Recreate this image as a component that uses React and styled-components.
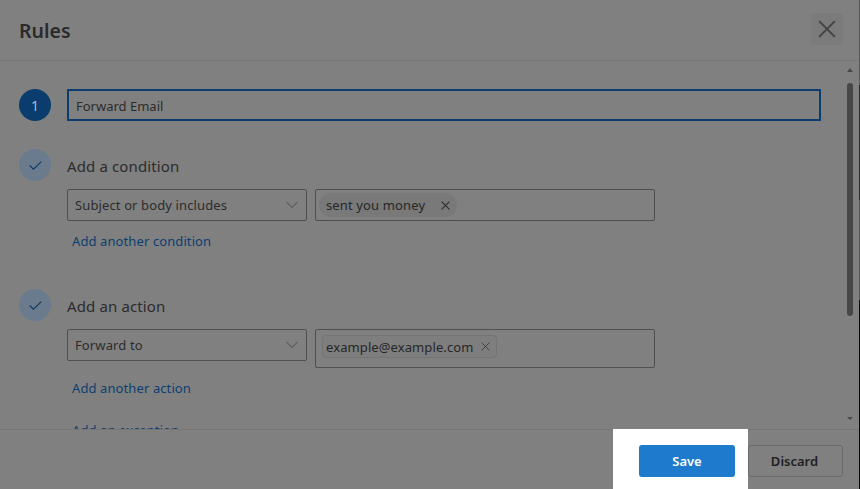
import React from "react";
import styled, { createGlobalStyle } from "styled-components";

const GlobalStyle = createGlobalStyle`
  html, body {
    margin: 0;
    padding: 0;
    background: #808080;
  }
  body {
    font-family: "Noto Sans", "Open Sans", sans-serif;
    overflow: hidden;
  }
`;

const Page = styled.div`
  display: flex;
  width: 860px;
  height: 489px;
  overflow: hidden;
`;
const Dialog = styled.div`
  flex: 1;
  display: flex;
  flex-direction: column;
  background: #808080;
  color: #2c2c2c;
`;
const EdgeStrip = styled.div`
  width: 1px;
  background: linear-gradient(#5a5a5a 0 85px, #2a2a2a 85px 200px, #555 200px 300px, #0a0a0a 300px);
`;
const Header = styled.div`
  height: 60px;
  flex: none;
  display: flex;
  align-items: center;
  justify-content: space-between;
  padding: 0 16px 0 19px;
  border-bottom: 1px solid #757575;
`;
const Title = styled.div`
  font-size: 19.5px;
  font-weight: 600;
  color: #2a2a2a;
  margin-top: 1px;
`;
const CloseButton = styled.div`
  width: 32px;
  height: 32px;
  margin-top: -2px;
  display: flex;
  align-items: center;
  justify-content: center;
  background: #7b7b7b;
  border-radius: 3px;
`;
const Body = styled.div`
  flex: 1;
  min-height: 0;
  display: flex;
`;
const Content = styled.div`
  flex: 1;
  min-width: 0;
  padding: 28px 0 0 19px;
  overflow: hidden;
`;
const Step = styled.div`
  display: flex;
  gap: 16px;
  margin-bottom: ${(p) => p.$gap}px;
`;
const Circle = styled.div`
  width: 32px;
  height: 32px;
  flex: none;
  border-radius: 50%;
  display: flex;
  align-items: center;
  justify-content: center;
  font-size: 14px;
  background: ${(p) => (p.$done ? "#6a7b8d" : "#0a3d6e")};
  color: #a9bccd;
`;
const StepMain = styled.div`
  flex: 1;
  min-width: 0;
`;
const NameInput = styled.div`
  box-sizing: border-box;
  width: 754px;
  height: 32px;
  border: 2px solid #0a3d6e;
  padding: 2px 7px 0;
  display: flex;
  align-items: center;
  font-size: 13px;
  color: #2c2c2c;
`;
const StepLabel = styled.div`
  box-sizing: border-box;
  height: 32px;
  padding-top: 2px;
  display: flex;
  align-items: center;
  font-size: 15px;
  letter-spacing: 0.13px;
  color: #2c2c2c;
  margin-bottom: 8px;
`;
const FieldRow = styled.div`
  display: flex;
  align-items: flex-start;
  gap: 8px;
`;
const Select = styled.div`
  box-sizing: border-box;
  width: 240px;
  height: 32px;
  border: 1px solid #4f4f4f;
  border-radius: 2px;
  padding: 0 8px 0 7px;
  display: flex;
  align-items: center;
  justify-content: space-between;
  font-size: 13px;
  letter-spacing: 0.12px;
`;
const TagBox = styled.div`
  box-sizing: border-box;
  width: 340px;
  height: ${(p) => p.$height}px;
  border: 1px solid #4f4f4f;
  border-radius: 2px;
  padding: ${(p) => (p.$outlined ? "5px 6px" : "3px")};
  display: flex;
  align-items: flex-start;
`;
const Tag = styled.div`
  height: 24px;
  display: flex;
  align-items: center;
  gap: 16px;
  padding: 0 7px;
  font-size: 13px;
  letter-spacing: 0.13px;
  border-radius: 12px;
  background: #797979;
  color: #262626;
  white-space: nowrap;
`;
const OutlinedTag = styled(Tag)`
  box-sizing: border-box;
  height: 23px;
  gap: 7px;
  padding: 0 6px 0 3px;
  border-radius: 4px;
  background: #7e7e7e;
  border: 1px solid #747474;
  letter-spacing: 0.1px;
`;
const AddLink = styled.div`
  font-size: 13px;
  letter-spacing: 0.1px;
  color: #0c3f70;
  margin: ${(p) => p.$top}px 0 0 5px;
  line-height: 18px;
  white-space: nowrap;
`;
const ScrollTrack = styled.div`
  width: 6px;
  margin-right: 6px;
  flex: none;
  display: flex;
  flex-direction: column;
  align-items: center;
  padding-top: 7px;
`;
const ArrowUp = styled.div`
  width: 0;
  height: 0;
  border-left: 3px solid transparent;
  border-right: 3px solid transparent;
  border-bottom: 4px solid #484848;
`;
const ArrowDown = styled.div`
  width: 0;
  height: 0;
  margin-top: 101px;
  border-left: 3px solid transparent;
  border-right: 3px solid transparent;
  border-top: 3px solid #484848;
`;
const Thumb = styled.div`
  width: 6px;
  height: 233px;
  margin-top: 11px;
  border-radius: 3px;
  background: #474747;
`;
const Footer = styled.div`
  height: 60px;
  flex: none;
  box-sizing: border-box;
  display: flex;
  justify-content: flex-end;
  border-top: 1px solid #757575;
  padding-right: 16px;
`;
const Spotlight = styled.div`
  width: 135px;
  margin-top: -1px;
  box-sizing: border-box;
  background: #fff;
  padding: 16px 13px 12px 26px;
`;
const SaveButton = styled.div`
  height: 32px;
  border-radius: 3px;
  background: #1d7acc;
  color: #fff;
  font-size: 13px;
  font-weight: 600;
  display: flex;
  align-items: center;
  justify-content: center;
`;
const DiscardButton = styled.div`
  box-sizing: border-box;
  width: 95px;
  height: 32px;
  margin-top: 15px;
  padding-right: 2px;
  border: 1px solid #6a6a6a;
  border-radius: 3px;
  color: #1f1f1f;
  font-size: 13px;
  font-weight: 600;
  display: flex;
  align-items: center;
  justify-content: center;
`;

const Cross = ({ size, stroke, width }) => (
  <svg width={size} height={size} viewBox="0 0 16 16" fill="none">
    <path d="M1 1L15 15M15 1L1 15" stroke={stroke} strokeWidth={width} />
  </svg>
);

const Chevron = () => (
  <svg width="12" height="8" viewBox="0 0 12 8" fill="none">
    <path d="M0.5 1L6 6.5L11.5 1" stroke="#4a4a4a" strokeWidth="1" />
  </svg>
);

const Check = () => (
  <svg width="13" height="9" viewBox="0 0 13 9" fill="none">
    <path d="M0.7 4.5L4.5 8.2L12.3 0.6" stroke="#0f3a63" strokeWidth="1.1" />
  </svg>
);

const App = () => {
  return (
    <Page>
      <GlobalStyle />
      <Dialog>
        <Header>
          <Title>Rules</Title>
          <CloseButton>
            <Cross size={18} stroke="#444" width={1.8} />
          </CloseButton>
        </Header>
        <Body>
          <Content>
            <Step $gap={28}>
              <Circle>1</Circle>
              <NameInput>Forward Email</NameInput>
            </Step>
            <Step $gap={39}>
              <Circle $done>
                <Check />
              </Circle>
              <StepMain>
                <StepLabel>Add a condition</StepLabel>
                <FieldRow>
                  <Select>
                    Subject or body includes
                    <Chevron />
                  </Select>
                  <TagBox $height={32}>
                    <Tag>
                      sent you money
                      <Cross size={9} stroke="#2a2a2a" width={1.8} />
                    </Tag>
                  </TagBox>
                </FieldRow>
                <AddLink $top={11}>Add another condition</AddLink>
              </StepMain>
            </Step>
            <Step $gap={0}>
              <Circle $done>
                <Check />
              </Circle>
              <StepMain>
                <StepLabel>Add an action</StepLabel>
                <FieldRow>
                  <Select>
                    Forward to
                    <Chevron />
                  </Select>
                  <TagBox $height={39} $outlined>
                    <OutlinedTag>
                      example@example.com
                      <Cross size={9} stroke="#3a3a3a" width={1.6} />
                    </OutlinedTag>
                  </TagBox>
                </FieldRow>
                <AddLink $top={11}>Add another action</AddLink>
                <AddLink $top={24}>Add an exception</AddLink>
              </StepMain>
            </Step>
          </Content>
          <ScrollTrack>
            <ArrowUp />
            <Thumb />
            <ArrowDown />
          </ScrollTrack>
        </Body>
        <Footer>
          <Spotlight>
            <SaveButton>Save</SaveButton>
          </Spotlight>
          <DiscardButton>Discard</DiscardButton>
        </Footer>
      </Dialog>
      <EdgeStrip />
    </Page>
  );
};

export default App;
